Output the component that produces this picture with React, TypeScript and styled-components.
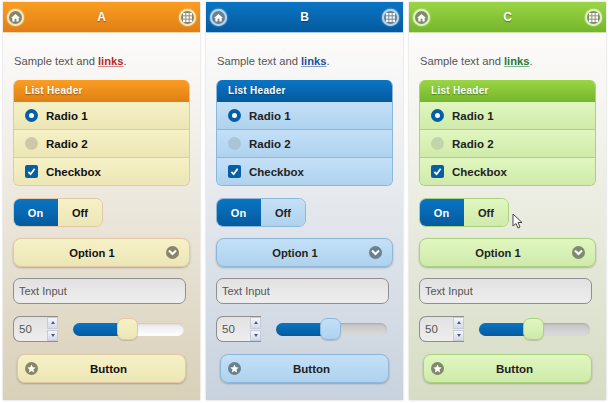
import React from 'react';
import styled, { createGlobalStyle, css } from 'styled-components';

type Tone = {
  name: string;
  top: string;
  bottom: string;
  headBorder: string;
  link: string;
  pageEnd: string;
  fillTop: string;
  fillBottom: string;
  line: string;
  ringA: string;
  glyph: string;
  off: string;
  text: string;
  track: string;
};

const tones: Tone[] = [
  { name: 'A', top: '#fb9d22', bottom: '#e07f15', headBorder: '#f6d9b0', link: '#b52a2a', pageEnd: '#d9d0b8', fillTop: '#f6f1c6', fillBottom: '#ece6b6', line: '#e2c8a4', ringA: '#f0ebc0', glyph: '#8a8468', off: '#cdc9a4', text: '#111', track: 'linear-gradient(#e8e8e8,#ffffff)' },
  { name: 'B', top: '#0a75c4', bottom: '#045a9e', headBorder: '#a9cbe6', link: '#1d4fa0', pageEnd: '#c8d2de', fillTop: '#c4e0f7', fillBottom: '#aed2ee', line: '#8db7da', ringA: '#b6d6ee', glyph: '#6a7f90', off: '#a9c3d8', text: '#222', track: 'linear-gradient(#c4c4c4,#dcdcdc)' },
  { name: 'C', top: '#9ad545', bottom: '#74b62c', headBorder: '#cfe6ae', link: '#1e7a34', pageEnd: '#d6dcc4', fillTop: '#e0f7c0', fillBottom: '#cfeaaa', line: '#a9d27e', ringA: '#dff3bf', glyph: '#7f8a6c', off: '#c3d4a8', text: '#222', track: 'linear-gradient(#c4c4c4,#dcdcdc)' },
];

const Global = createGlobalStyle`
  html, body { margin: 0; padding: 0; background: #fff; }
  body { width: 610px; height: 403px; overflow: hidden; font-family: "Liberation Sans", Arial, sans-serif; }
`;

const Screen = styled.div`
  display: flex;
  gap: 6px;
  padding: 2px 3px 0;
  position: relative;
`;

const Phone = styled.section<{ $t: Tone }>`
  width: 197px;
  height: 398px;
  display: flex;
  flex-direction: column;
  background: linear-gradient(#ffffff 0, #fbfaf9 45px, ${p => p.$t.pageEnd} 100%);
  box-shadow: 0 0 2px rgba(90, 90, 90, 0.35);
`;

const TopBar = styled.header<{ $t: Tone }>`
  height: 30px;
  flex: none;
  box-sizing: content-box;
  display: flex;
  align-items: center;
  justify-content: space-between;
  padding: 0 4px;
  color: #fff;
  font-size: 12px;
  font-weight: bold;
  text-shadow: 0 1px 1px rgba(0, 0, 0, 0.4);
  background: linear-gradient(${p => p.$t.top}, ${p => p.$t.bottom});
  border-bottom: 1px solid ${p => p.$t.headBorder};
`;

const Body = styled.div`
  flex: 1;
  display: flex;
  flex-direction: column;
  padding: 0 10px;
`;

const Round = styled.span<{ $t: Tone }>`
  width: 13px;
  height: 13px;
  border-radius: 50%;
  background: ${p => p.$t.glyph};
  border: 2px solid ${p => p.$t.ringA};
  box-shadow: 0 0 2px rgba(255, 255, 255, 0.7);
  display: flex;
  align-items: center;
  justify-content: center;
  flex: none;
  svg { display: block; }
`;

const Sample = styled.p`
  margin: 21px 0 0 1px;
  height: 14px;
  line-height: 14px;
  font-size: 11.2px;
  color: #555;
`;

const Link = styled.a<{ $t: Tone }>`
  color: ${p => p.$t.link};
  font-weight: bold;
  text-decoration: underline;
  text-decoration-color: ${p => p.$t.link}88;
`;

const List = styled.div<{ $t: Tone }>`
  margin-top: 12px;
  height: 106px;
  box-sizing: border-box;
  border-radius: 6px;
  border: 1px solid ${p => p.$t.line};
  border-top: 0;
  overflow: hidden;
  display: flex;
  flex-direction: column;
`;

const ListHeader = styled.div<{ $t: Tone }>`
  height: 22px;
  flex: none;
  box-sizing: border-box;
  padding-left: 11px;
  line-height: 22px;
  font-size: 10px;
  font-weight: bold;
  letter-spacing: 0.3px;
  color: #fff;
  text-shadow: 0 1px 1px rgba(0, 0, 0, 0.35);
  background: linear-gradient(${p => p.$t.top}, ${p => p.$t.bottom});
`;

const Row = styled.div<{ $t: Tone; $last?: boolean }>`
  flex: 1;
  display: flex;
  align-items: center;
  gap: 8px;
  padding-left: 11px;
  font-size: 11.5px;
  font-weight: bold;
  color: ${p => p.$t.text};
  background: linear-gradient(${p => p.$t.fillTop}, ${p => p.$t.fillBottom});
  ${p => !p.$last && css`border-bottom: 1px solid ${p.$t.line};`}
`;

const RadioOn = styled.span`
  width: 13px;
  height: 13px;
  box-sizing: border-box;
  border-radius: 50%;
  border: 4px solid #045fa6;
  background: #fff;
  flex: none;
`;

const RadioOff = styled.span<{ $t: Tone }>`
  width: 13px;
  height: 13px;
  border-radius: 50%;
  background: ${p => p.$t.off};
  flex: none;
`;

const Check = styled.span`
  width: 13px;
  height: 13px;
  border-radius: 2px;
  background: #045fa6;
  display: flex;
  align-items: center;
  justify-content: center;
  flex: none;
`;

const Toggle = styled.div<{ $t: Tone }>`
  margin-top: 12px;
  width: 90px;
  height: 29px;
  box-sizing: border-box;
  display: flex;
  border-radius: 7px;
  border: 1px solid ${p => p.$t.line};
  overflow: hidden;
  font-size: 11px;
  font-weight: bold;
`;

const ToggleOn = styled.div`
  width: 45px;
  margin: -1px 0 -1px -1px;
  display: flex;
  align-items: center;
  justify-content: center;
  color: #fff;
  background: linear-gradient(#0a75c4, #045a9e);
`;

const ToggleOff = styled.div<{ $t: Tone }>`
  flex: 1;
  display: flex;
  align-items: center;
  justify-content: center;
  color: ${p => p.$t.text};
  background: linear-gradient(${p => p.$t.fillTop}, ${p => p.$t.fillBottom});
`;

const Select = styled.div<{ $t: Tone }>`
  margin-top: 11px;
  height: 29px;
  box-sizing: border-box;
  position: relative;
  display: flex;
  align-items: center;
  justify-content: center;
  padding-right: 19px;
  border-radius: 8px;
  border: 1px solid ${p => p.$t.line};
  box-shadow: 0 1px 2px rgba(0, 0, 0, 0.25);
  font-size: 11.2px;
  font-weight: bold;
  color: ${p => p.$t.text};
  background: linear-gradient(${p => p.$t.fillTop}, ${p => p.$t.fillBottom});
`;

const SelectArrow = styled.span<{ $t: Tone }>`
  position: absolute;
  right: 10px;
  top: 7px;
  width: 13px;
  height: 13px;
  border-radius: 50%;
  background: ${p => p.$t.glyph};
  display: flex;
  align-items: center;
  justify-content: center;
`;

const TextInput = styled.div`
  margin-top: 11px;
  width: 173px;
  height: 26px;
  box-sizing: border-box;
  padding-left: 5px;
  line-height: 24px;
  font-size: 11px;
  color: #555;
  border: 1px solid #8f8f8f;
  border-radius: 7px;
  background: linear-gradient(#e2e2e2, #eeeeee);
`;

const ControlRow = styled.div`
  margin-top: 12px;
  display: flex;
  align-items: center;
  height: 26px;
`;

const Spinner = styled.div`
  width: 45px;
  height: 26px;
  box-sizing: border-box;
  flex: none;
  display: flex;
  align-items: center;
  justify-content: space-between;
  padding-left: 5px;
  font-size: 11.5px;
  color: #555;
  border: 1px solid #8f8f8f;
  border-radius: 7px 0 0 7px;
  border-right: 0;
  background: linear-gradient(#e2e2e2, #eeeeee);
`;

const SpinButtons = styled.div`
  width: 11px;
  height: 24px;
  display: flex;
  flex-direction: column;
  gap: 1px;
`;

const SpinButton = styled.span`
  flex: 1;
  display: flex;
  align-items: center;
  justify-content: center;
  background: linear-gradient(#f4f6fa, #d6dae6);
  border: 1px solid #c6cbdb;
  box-sizing: border-box;
`;

const SpinArrow = styled.i<{ $down?: boolean }>`
  width: 0;
  height: 0;
  border-left: 2.5px solid transparent;
  border-right: 2.5px solid transparent;
  ${p => (p.$down ? 'border-top: 3px solid #4a5a90;' : 'border-bottom: 3px solid #4a5a90;')}
`;

const Track = styled.div<{ $t: Tone }>`
  margin-left: 15px;
  width: 111px;
  height: 13px;
  position: relative;
  border-radius: 7px;
  background: ${p => p.$t.track};
  box-shadow: inset 0 1px 2px rgba(0, 0, 0, 0.15);
`;

const TrackFill = styled.div`
  height: 100%;
  border-radius: 7px 0 0 7px;
  background: linear-gradient(#0a75c4, #045a9e);
`;

const Thumb = styled.span<{ $t: Tone }>`
  position: absolute;
  top: -5px;
  width: 21px;
  height: 22px;
  box-sizing: border-box;
  border-radius: 7px;
  border: 1px solid ${p => p.$t.line};
  background: linear-gradient(${p => p.$t.fillTop}, ${p => p.$t.fillBottom});
  box-shadow: 0 1px 1px rgba(0, 0, 0, 0.15);
`;

const ActionButton = styled.button<{ $t: Tone }>`
  margin: 12px 0 0 4px;
  width: 169px;
  height: 29px;
  box-sizing: border-box;
  padding: 0 0 0 14px;
  position: relative;
  border-radius: 8px;
  border: 1px solid ${p => p.$t.line};
  box-shadow: 0 1px 2px rgba(0, 0, 0, 0.25);
  font: bold 11.5px "Liberation Sans", Arial, sans-serif;
  color: ${p => p.$t.text};
  background: linear-gradient(${p => p.$t.fillTop}, ${p => p.$t.fillBottom});
`;

const StarBadge = styled.span<{ $t: Tone }>`
  position: absolute;
  left: 7px;
  top: 7px;
  width: 13px;
  height: 13px;
  border-radius: 50%;
  background: ${p => p.$t.glyph};
  display: flex;
  align-items: center;
  justify-content: center;
`;

const Cursor = styled.svg`
  position: absolute;
  left: 512px;
  top: 213px;
`;

const HomeIcon = () => (
  <svg width="9" height="9" viewBox="0 0 10 10"><path d="M5 1 L10 5.5 H8.5 V9.5 H6 V6.5 H4 V9.5 H1.5 V5.5 H0 Z" fill="#fff" /></svg>
);

const GridIcon = () => (
  <svg width="9" height="9" viewBox="0 0 9 9" fill="#fff">
    {[0, 3.3, 6.6].flatMap(x => [0, 3.3, 6.6].map(y => <rect key={`${x}-${y}`} x={x} y={y} width="2.4" height="2.4" />))}
  </svg>
);

const Panel = ({ t }: { t: Tone }) => (
  <Phone $t={t}>
    <TopBar $t={t}>
      <Round $t={t}><HomeIcon /></Round>
      <span>{t.name}</span>
      <Round $t={t}><GridIcon /></Round>
    </TopBar>
    <Body>
      <Sample>Sample text and <Link $t={t}>links</Link>.</Sample>
      <List $t={t}>
        <ListHeader $t={t}>List Header</ListHeader>
        <Row $t={t}><RadioOn />Radio 1</Row>
        <Row $t={t}><RadioOff $t={t} />Radio 2</Row>
        <Row $t={t} $last>
          <Check>
            <svg width="9" height="9" viewBox="0 0 10 10"><path d="M1.5 5.5 L4 8 L8.5 2" fill="none" stroke="#fff" strokeWidth="2" /></svg>
          </Check>
          Checkbox
        </Row>
      </List>
      <Toggle $t={t}>
        <ToggleOn>On</ToggleOn>
        <ToggleOff $t={t}>Off</ToggleOff>
      </Toggle>
      <Select $t={t}>
        Option 1
        <SelectArrow $t={t}>
          <svg width="9" height="7" viewBox="0 0 9 7"><path d="M1 1.5 L4.5 5 L8 1.5" fill="none" stroke="#fff" strokeWidth="2" /></svg>
        </SelectArrow>
      </Select>
      <TextInput>Text Input</TextInput>
      <ControlRow>
        <Spinner>
          50
          <SpinButtons>
            <SpinButton><SpinArrow /></SpinButton>
            <SpinButton><SpinArrow $down /></SpinButton>
          </SpinButtons>
        </Spinner>
        <Track $t={t}>
          <TrackFill style={{ width: '45%' }} />
          <Thumb $t={t} style={{ left: 44 }} />
        </Track>
      </ControlRow>
      <ActionButton $t={t}>
        <StarBadge $t={t}>
          <svg width="9" height="9" viewBox="0 0 10 10"><path d="M5 0.5 L6.4 3.6 L9.7 4 L7.2 6.2 L7.9 9.5 L5 7.8 L2.1 9.5 L2.8 6.2 L0.3 4 L3.6 3.6 Z" fill="#fff" /></svg>
        </StarBadge>
        Button
      </ActionButton>
    </Body>
  </Phone>
);

export default function App() {
  return (
    <>
      <Global />
      <Screen>
        {tones.map(t => <Panel key={t.name} t={t} />)}
        <Cursor width="12" height="16" viewBox="0 0 12 16">
          <path d="M1 1 V13 L4 10.5 L6 15 L8 14 L6 9.5 H10 Z" fill="#fff" stroke="#444" strokeWidth="1" />
        </Cursor>
      </Screen>
    </>
  );
}
